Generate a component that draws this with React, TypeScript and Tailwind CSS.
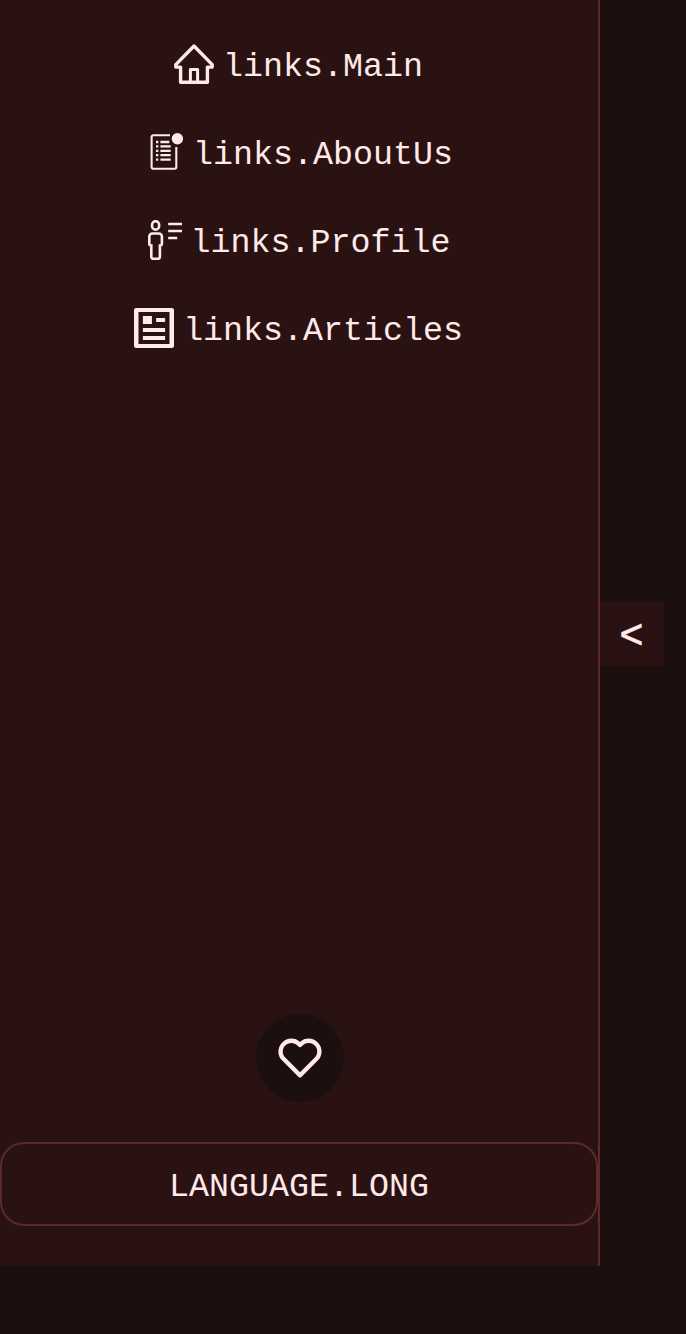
import type { ReactNode } from "react";
import { BiHeart } from "react-icons/bi";

const HomeIcon = () => (
  <svg width="40" height="40" viewBox="0 0 40 40" fill="none" stroke="currentColor" strokeWidth="3.4" strokeLinejoin="round">
    <path d="M20 2 1.8 20.6v2.5h4.8v15.2h26.8V23.1h4.8v-2.5z" />
    <path d="M16.4 38V25.6h7.2V38" strokeWidth="3" />
  </svg>
);

const ListIcon = () => (
  <svg width="40" height="40" viewBox="0 0 40 40" fill="none" stroke="currentColor">
    <path d="M26 3.3H9.3A1.7 1.7 0 0 0 7.6 5v30a1.7 1.7 0 0 0 1.7 1.8h21.3a1.7 1.7 0 0 0 1.7-1.7V15" strokeWidth="2.1" />
    <path d="M12 10h2.3M12 14.4h2.3M12 18.8h2.3M12 23.2h2.3M12 27.6h2.3M16.4 10h8.9M16.4 14.4h10.3M16.4 18.8h10.3M16.4 23.2h10.3M16.4 27.6h10.3" strokeWidth="2.3" />
    <circle cx="33.4" cy="6.8" r="5.7" fill="currentColor" stroke="none" />
  </svg>
);

const PersonIcon = () => (
  <svg width="35" height="40" viewBox="0 0 35 40" fill="none" stroke="currentColor" strokeWidth="2.6">
    <ellipse cx="8.6" cy="5.4" rx="3.6" ry="4.2" />
    <path d="M5.3 13.5h6.6a3 3 0 0 1 3 3v7a2 2 0 0 1-2 2v11.3a2 2 0 0 1-2 2H6.3a2 2 0 0 1-2-2V25.5a2 2 0 0 1-2-2v-7a3 3 0 0 1 3-3z" />
    <path d="M21.2 4H35M21.2 11H35M21.2 18h9" />
  </svg>
);

const ArticleIcon = () => (
  <svg width="40" height="40" viewBox="0 0 40 40" fill="currentColor">
    <path fillRule="evenodd" d="M2.2 0h35.6A2.2 2.2 0 0 1 40 2.2v35.6a2.2 2.2 0 0 1-2.2 2.2H2.2A2.2 2.2 0 0 1 0 37.8V2.2A2.2 2.2 0 0 1 2.2 0zM4.5 4v32h31V4z" />
    <path d="M8.9 8h9v8h-9zM22.2 10h8.9v4h-8.9zM8.9 20h22.2v4H8.9zM8.9 28h22.2v4H8.9z" />
  </svg>
);

const links: { icon: ReactNode; label: string }[] = [
  { icon: <HomeIcon />, label: "links.Main" },
  { icon: <ListIcon />, label: "links.AboutUs" },
  { icon: <PersonIcon />, label: "links.Profile" },
  { icon: <ArticleIcon />, label: "links.Articles" },
];

export default function App() {
  return (
    <div className="flex h-[1334px] w-full items-start overflow-hidden bg-[#1b0f0f] font-['Liberation_Mono',monospace] text-[33.3px] leading-[40px] text-[#ffe9e9]">
      <aside className="flex h-[1266px] w-[600px] shrink-0 flex-col border-r-2 border-[#5c2a2a] bg-[#2a1212] pt-[44px] pb-[40px]">
        <nav className="flex flex-col gap-12">
          {links.map(({ icon, label }) => (
            <a key={label} href="#" className="flex h-10 items-center justify-center gap-[9px] pr-px">
              {icon}
              <span className="pt-[6px]">{label}</span>
            </a>
          ))}
        </nav>
        <div className="mt-auto flex flex-col items-center gap-10">
          <button aria-label="Like" className="ml-[2px] flex size-[88px] items-center justify-center rounded-full bg-[#1b0f0f]">
            <BiHeart className="size-[52px]" />
          </button>
          <button className="flex h-[84px] w-full items-center justify-center rounded-3xl border-2 border-[#5c2a2a] pt-[6px]">
            LANGUAGE.LONG
          </button>
        </div>
      </aside>
      <button className="mt-[602px] flex size-16 items-center justify-center bg-[#2a1212] pr-[1px] font-['Liberation_Sans',sans-serif] text-[40px] [-webkit-text-stroke:0.8px_#ffe9e9]">
        &lt;
      </button>
    </div>
  );
}
